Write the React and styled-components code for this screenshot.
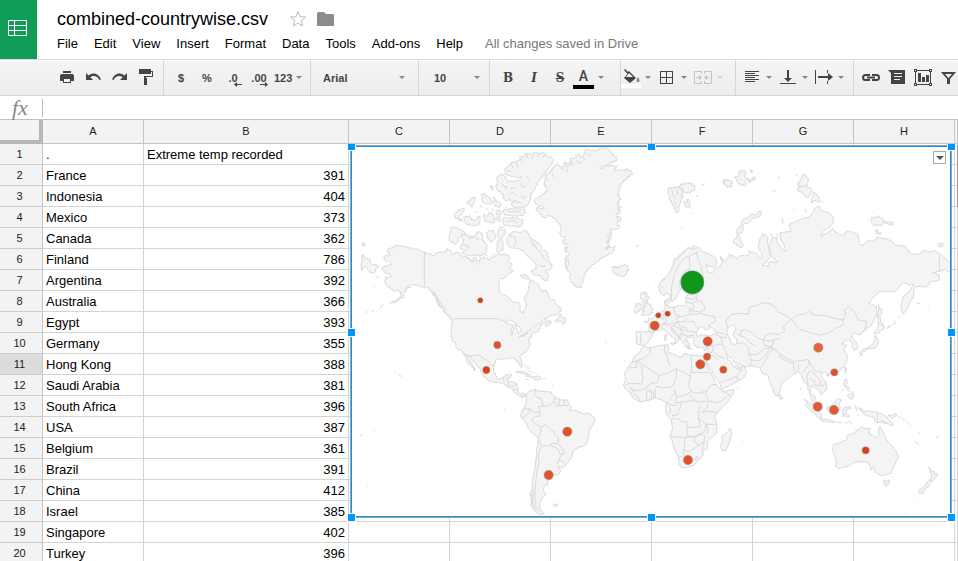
import React from 'react';
import styled, { createGlobalStyle, css } from 'styled-components';

const GlobalStyle = createGlobalStyle`
  * {
    box-sizing: border-box;
  }

  body {
    margin: 0;
    background: #fff;
    color: #000;
    font-family: "Liberation Sans", Arial, sans-serif;
    font-size: 13px;
  }

  button, select, input {
    margin: 0;
    padding: 0;
    border: none;
    background: none;
    color: inherit;
    font: inherit;
  }

  svg {
    display: block;
  }
`;

const Page = styled.div`
  display: flex;
  flex-direction: column;
  height: 100vh;
  overflow: hidden;
`;

const Header = styled.header`
  display: flex;
  flex-shrink: 0;
`;

const Logo = styled.a`
  width: 37px;
  height: 59px;
  padding: 20px 0 0 8px;
  background: #0f9d58;
`;

const HeaderInfo = styled.div`
  padding: 7px 0 0 20px;
`;

const TitleRow = styled.div`
  display: flex;
  align-items: center;
  height: 24px;
  margin-bottom: 3px;
`;

const Title = styled.h1`
  margin: 0 21px 0 0;
  font-size: 18px;
  font-weight: normal;
  line-height: 24px;
`;

const TitleButton = styled.button`
  margin-right: 10px;
`;

const MenuBar = styled.nav`
  display: flex;
  gap: 16px;
  line-height: 20px;
  white-space: nowrap;
`;

const SaveStatus = styled.span`
  margin-left: 6px;
  color: #777;
`;

const Toolbar = styled.div`
  display: flex;
  flex-shrink: 0;
  height: 37px;
  overflow: hidden;
  border-top: 1px solid #d9d9d9;
  border-bottom: 1px solid #d5d5d5;
  background: linear-gradient(#fff 1px, #f5f5f5 1px, #ececec);
  color: #444;
  font-size: 11px;
  font-weight: bold;
`;

const ToolGroup = styled.div`
  display: flex;
  flex-shrink: 0;
  align-items: center;
  gap: ${({ $gap }) => $gap ?? 0}px;
  padding: 0 ${({ $right }) => $right ?? 4}px 0 ${({ $left }) => $left ?? 0}px;
  border-right: ${({ $last }) => ($last ? 'none' : '1px solid #d5d5d5')};
`;

const ToolButton = styled.button`
  position: relative;
  display: flex;
  align-items: center;
  justify-content: center;
  width: 26px;
  height: 34px;

  ${({ $serif }) => $serif && css`
    font-family: "DejaVu Serif", serif;
    font-size: 12px;
    font-style: ${$serif === 'italic' ? 'italic' : 'normal'};
    text-decoration: ${$serif === 'strike' ? 'line-through' : 'none'};
  `}
`;

const DropButton = styled.button`
  display: flex;
  align-items: center;
  width: 34px;
  height: 34px;
  opacity: ${({ $off }) => ($off ? 0.25 : 1)};
`;

const FormatButton = styled(DropButton)`
  gap: 4px;
  padding-left: 2px;
`;

const DropIcon = styled.span`
  display: flex;
  align-items: center;
  justify-content: center;
  width: 20px;
  height: 20px;
  margin-right: 4px;
`;

const TextColor = styled.span`
  width: 21px;
  height: 22px;
  margin-right: 4px;
  border-bottom: 4px solid #000;
  font-family: Roboto, sans-serif;
  font-size: 14px;
  font-weight: 500;
  line-height: 18px;
`;

const Caret = styled.span`
  border: 3px solid transparent;
  border-top-color: #888;
  border-bottom: none;
`;

const DecimalArrow = styled.svg`
  position: absolute;
  right: 4px;
  bottom: 8px;
`;

const SelectBox = styled.label`
  display: flex;
  align-items: center;
  width: ${({ $width }) => $width}px;
  padding: 0 9px 0 ${({ $left }) => $left}px;
  flex-shrink: 0;

  select {
    flex: 1;
    min-width: 0;
    appearance: none;
    outline: none;
  }
`;

const FormulaBar = styled.label`
  display: flex;
  flex-shrink: 0;
  align-items: center;
  height: 24px;
  border-bottom: 1px solid #c0c0c0;

  input {
    flex: 1;
    height: 18px;
    padding: 0 4px;
    border-left: 1px solid #c0c0c0;
    outline: none;
  }
`;

const FormulaMark = styled.span`
  width: 42px;
  padding-left: 12px;
  color: #888;
  font-family: "Liberation Serif", serif;
  font-size: 22px;
  font-style: italic;
  line-height: 22px;
`;

const Sheet = styled.main`
  position: relative;
  flex: 1;
  overflow: hidden;
`;

const Grid = styled.table`
  width: 100%;
  table-layout: fixed;
  border-collapse: separate;
  border-spacing: 0;
`;

const ColumnHead = styled.th`
  height: 24px;
  padding: 0 0 1px;
  border-right: 1px solid #c4c4c4;
  border-bottom: 1px solid #c4c4c4;
  background: #f3f3f3;
  color: #222;
  font-size: 11px;
  font-weight: normal;
`;

const Corner = styled.td`
  padding: 0;
  border-right: 4px solid #b7b7b7;
  border-bottom: 4px solid #b7b7b7;
  background: #f3f3f3;
`;

const RowHead = styled.th`
  height: 21px;
  padding: 0 3px 0 0;
  border-right: 1px solid #c4c4c4;
  border-bottom: 1px solid #ccc;
  background: ${({ $active }) => ($active ? '#dcdcdc' : '#f3f3f3')};
  color: #222;
  font-size: 11px;
  font-weight: normal;
  line-height: 20px;
`;

const Cell = styled.td`
  height: 21px;
  padding: 2px 3px 0;
  overflow: hidden;
  border-right: 1px solid #d4d4d4;
  border-bottom: 1px solid #d4d4d4;
  line-height: 18px;
  text-align: ${({ $number }) => ($number ? 'right' : 'left')};
  white-space: nowrap;
`;

const ChartLayer = styled.div`
  position: absolute;
  inset: 24px 0 0 43px;
  overflow: hidden;
`;

const ChartFrame = styled.section`
  position: absolute;
  top: 2px;
  left: 308px;
  width: 600px;
  border: 1px solid #0096fd;
  background: #fff;
  box-shadow: 0 0 0 1px #a5a09c;
`;

const Handles = styled.div`
  position: absolute;
  inset: -1px;
  pointer-events: none;
`;

const Handle = styled.span`
  position: absolute;
  top: ${({ $y }) => $y};
  left: ${({ $x }) => $x};
  width: 9px;
  height: 9px;
  margin: -4px;
  border: 1px solid #fff;
  background: #0096fd;
`;

const ChartMenu = styled.button`
  position: absolute;
  top: 4px;
  right: 4px;
  display: flex;
  align-items: center;
  justify-content: center;
  width: 13px;
  height: 13px;
  border: 1px solid #aaa;
  background: #fff;

  span {
    border: 4px solid transparent;
    border-top-color: #555;
    border-bottom: none;
  }
`;

const ScrollThumb = styled.div`
  position: absolute;
  top: 25px;
  right: 0;
  width: 1px;
  height: 62px;
  background: #999;
`;

const MENUS = ['File', 'Edit', 'View', 'Insert', 'Format', 'Data', 'Tools', 'Add-ons', 'Help'];

const COLUMNS = ['A', 'B', 'C', 'D', 'E', 'F', 'G', 'H', ''];

const ROWS = [
  ['.', 'Extreme temp recorded'],
  ['France', 391],
  ['Indonesia', 404],
  ['Mexico', 373],
  ['Canada', 362],
  ['Finland', 786],
  ['Argentina', 392],
  ['Australia', 366],
  ['Egypt', 393],
  ['Germany', 355],
  ['Hong Kong', 388],
  ['Saudi Arabia', 381],
  ['South Africa', 396],
  ['USA', 387],
  ['Belgium', 361],
  ['Brazil', 391],
  ['China', 412],
  ['Israel', 385],
  ['Singapore', 402],
  ['Turkey', 396],
];

const ACTIVE_ROW = 11;

// Map regions. Each one has its own origin on the map canvas.
// `rough` is how far the coast is broken up between its points.
const REGIONS = [
  {
    name: 'north-america',
    at: [0, 0],
    rough: 2,
    land: [
      'M223,336 205,330 190,324 178,325 172,320 160,321 150,315 135,318 128,323 120,325 110,335 120,342 118,346 105,348 100,352 108,362 122,368 124,375 110,376 97,382 98,390 106,398 122,404 124,410 105,412 110,418 102,424 112,440 122,445 130,452 142,452 155,458 150,470 138,482 120,489 140,484 154,474 162,472 161,460 170,450 168,444 178,434 190,436 202,435 214,441 224,443 233,442 240,450 247,452 250,462 260,468 260,480 268,486 270,498 280,504 284,518 296,526 308,538 304,548 305,565 303,590 308,602 316,610 320,625 335,634 341,642 348,656 353,668 366,682 375,692 372,680 360,665 352,646 362,650 366,660 378,670 388,685 396,697 400,710 420,722 432,728 448,727 458,732 475,740 485,746 495,758 508,768 520,771 530,766 522,762 508,758 502,748 502,732 490,727 475,725 470,715 480,714 484,703 468,703 460,714 445,717 436,707 431,690 433,670 440,660 452,656 465,658 478,653 492,656 503,664 508,675 516,682 518,672 512,658 510,648 522,638 535,627 540,612 536,600 542,590 548,580 560,576 572,565 570,557 582,550 590,558 605,548 598,542 590,546 586,538 600,528 620,522 634,513 632,505 622,497 612,480 603,478 592,462 588,448 578,457 570,446 565,434 553,427 545,420 536,430 538,446 531,460 524,472 528,495 520,520 512,514 508,490 490,485 472,470 452,460 446,444 449,420 463,412 478,400 490,393 480,388 486,372 478,368 476,350 462,340 455,348 445,338 434,352 425,350 418,362 402,350 392,358 386,365 374,352 365,360 350,352 336,348 322,337 308,342 302,334 290,325 286,337 274,334 262,340 250,347 240,342 230,342Z',
      'M465,90 470,80 480,75 486,66 500,66 508,60 510,50 520,50 530,42 545,44 556,38 570,40 580,38 592,47 608,56 607,72 596,80 592,92 580,105 568,122 556,140 550,156 540,162 543,180 530,195 524,203 508,200 492,204 484,192 498,182 486,184 476,176 472,182 458,176 462,164 446,155 438,140 442,128 440,115 452,100 462,108 474,122 492,126 512,118 515,110 496,114 480,106 465,104Z',
      'M472,298 478,282 492,276 510,276 526,272 540,285 540,296 554,300 570,314 576,328 588,334 596,350 594,362 608,376 600,390 586,392 594,405 592,424 580,418 570,408 552,404 542,392 560,386 556,372 540,352 530,348 520,330 498,326 482,322 470,312Z',
      'M335,285 345,280 358,292 375,285 384,276 398,280 396,300 412,315 408,338 395,347 370,345 352,348 336,340 345,330 330,325 340,305Z',
      'M303,262 320,262 345,278 330,290 318,312 305,308 298,298Z',
      'M312,228 325,208 343,205 335,225 318,236Z',
      'M340,232 360,226 365,240 375,242 388,228 392,242 385,254 365,258 345,248Z',
      'M350,190 362,176 374,172 375,185 365,202 358,192Z',
      'M395,165 403,158 410,170 422,175 425,190 412,194 398,186Z',
      'M400,225 410,228 420,218 428,222 435,238 430,250 415,244 405,245Z',
      'M430,172 440,182 452,190 448,205 434,196Z',
      'M440,212 450,210 452,225 438,224Z',
      'M440,232 452,230 450,244 442,242Z',
      'M326,236 336,238 334,244 328,242Z',
      'M458,212 480,205 500,208 525,206 524,222 500,230 480,225 462,225Z',
      'M458,235 490,232 505,238 520,238 515,258 480,260 460,252Z',
      'M412,275 430,270 437,290 425,308 418,300 410,290Z',
      'M445,270 465,268 466,278 456,294 458,310 460,330 442,335 440,310 450,300 442,288Z',
      'M420,138 427,138 428,150 422,144Z',
      'M510,408 525,402 540,416 528,418Z',
      'M616,545 622,535 632,522 634,532 646,534 648,545 640,552 632,544Z',
      'M35,345 50,354 60,360 62,370 85,378 78,388 75,396 62,400 50,382 42,380 35,392Z',
      'M36,310 46,310 44,319 38,318Z',
      'M496,698 515,692 530,700 546,710 534,709 524,702 508,697Z',
      'M545,714 552,709 566,709 575,716 560,719Z',
      'M610,1093 622,1093 620,1099 612,1099Z',
    ],
    water: [
      'M465,545 480,539 498,550 490,557 478,552Z',
      'M487,560 482,580 486,586 491,565Z',
      'M498,554 510,562 514,572 504,580 500,568Z',
      'M506,590 522,584 534,578 520,588Z',
    ],
    borders: [
      'M223,336 223,443',
      'M310,536 445,536 465,545',
      'M512,590 535,574 548,562 565,552 580,540 588,530',
      'M341,642 362,648 390,645 400,656 410,660 420,668 426,678 434,676',
      'M460,714 462,728 M470,715 476,726 472,738 M502,733 490,738 478,738 M500,750 488,748 M520,763 518,771',
      'M240,452 262,480 270,500 290,522 308,545 M252,455 270,488 286,508 M246,458 258,476 266,498',
      'M100,492 90,506 M65,514 72,512 M45,516 52,516 M70,441 74,441 M76,408 88,414 M168,446 176,442 186,444',
      'M134,696 137,698 M146,702 156,711 M522,672 530,680 540,686 M532,690 550,700 M580,716 587,716 M528,718 536,719 M606,735 611,737',
      'M461,806 465,809 M766,605 769,607 M780,611 782,612 M28,886 36,886 M70,871 74,871 M51,1039 54,1039',
      'M480,288 495,290 498,312 488,318 M540,300 548,315 560,320 M380,368 386,374 M355,296 372,292 388,300 M340,314 356,318 350,330 M548,308 560,326 574,340 584,358 M566,374 578,380 588,376',
      // Ellesmere fjords
      'M484,74 490,84 M498,68 504,80 498,86 M512,54 518,66 M530,44 534,56 M548,46 546,58 M566,42 564,52 M584,44 578,54 M470,92 482,94 M456,130 464,142 474,140 M480,146 494,142 502,150 M476,162 490,158 500,166 M512,128 516,142 526,140 M530,110 538,120 M510,168 520,176 528,170 M500,186 514,188',
      'M392,196 396,204 M466,198 470,204 M446,262 462,262 M408,206 416,210 M376,218 384,214 M424,206 432,212 M474,214 496,216 512,214 M470,244 486,242 504,248 M466,138 470,152',
      'M388,346 392,356 M352,354 366,366 380,360 M404,344 416,350 M426,346 434,340 M470,342 478,350',
    ],
  },
  {
    name: 'south-america',
    at: [0, 540],
    land: [
      'M528,226 535,216 548,210 558,207 556,214 568,212 582,215 604,216 606,224 618,234 635,240 652,240 656,250 664,262 658,270 680,272 700,282 718,280 732,292 736,302 728,316 718,330 716,350 710,370 702,378 685,382 668,394 666,410 656,424 644,438 632,444 622,438 632,452 626,464 608,466 604,478 592,480 594,492 582,500 580,512 588,522 576,535 568,552 570,566 582,582 568,583 552,572 542,556 546,540 540,520 548,505 546,488 552,460 558,420 560,390 566,355 550,342 536,326 524,302 511,290 516,274 526,256 530,240Z',
    ],
    borders: [
      'M556,212 552,222 560,232 574,236 580,258 566,260 570,288',
      'M515,272 528,264 540,270 532,284 516,294 M536,264 550,276 568,278',
      'M570,288 552,290 546,304 562,316 574,320 570,345 566,355',
      'M574,320 588,314 600,328 612,334 616,348 626,352 624,372 606,370 598,378 574,378 566,355',
      'M580,258 596,258 612,244 616,230 M612,244 620,258 640,256 654,256 M628,238 626,256 M644,240 642,254',
      'M606,370 604,376 622,386 632,404 642,398 638,386 624,372 M642,398 630,412 622,432 M626,418 646,430',
      'M574,378 566,400 566,430 560,460 556,500 554,530 558,560 570,568',
      'M546,500 550,520 546,545 556,566 M544,524 548,548 M542,540 552,562 568,576',
    ],
  },
  {
    name: 'greenland',
    at: [540, 0],
    rough: 3,
    land: [
      'M12,182 28,168 44,162 50,150 48,135 40,132 48,118 44,105 62,98 66,84 80,75 82,68 98,90 100,70 108,68 112,82 118,66 126,76 122,55 136,54 140,44 156,50 168,38 165,25 180,33 200,30 212,26 228,22 240,35 252,44 260,58 250,68 230,74 208,84 240,78 264,78 250,92 268,88 284,94 290,84 306,97 300,110 286,116 280,128 266,138 270,152 262,165 274,178 260,190 274,202 268,218 258,224 274,238 262,250 268,262 252,270 240,268 246,282 232,288 244,300 228,306 240,318 226,328 258,318 248,335 232,348 210,355 195,372 170,388 166,402 158,418 154,444 142,438 134,440 122,418 118,400 110,384 104,372 108,352 118,344 104,330 114,316 98,304 106,296 92,285 92,262 76,235 58,228 42,232 28,222 18,205 42,204 20,192Z',
      'M247,382 256,378 262,386 272,376 288,376 298,390 280,408 262,406 250,396Z',
      'M415,148 424,142 435,145 445,138 455,150 460,170 450,184 450,198 442,218 432,206 430,192 418,180Z',
      'M450,138 462,128 475,132 484,128 495,145 480,160 464,156 456,150Z',
      'M460,185 468,188 475,178 482,200 470,202Z',
      'M578,124 590,118 600,128 590,138Z',
      'M332,466 338,456 350,458 346,468 356,470 352,484 364,502 370,520 350,524 334,526 344,514 336,510 346,500 336,488Z',
      'M316,494 330,488 334,500 330,514 314,518Z',
    ],
    borders: [
      'M520,134 524,130 M452,262 456,262 M482,221 486,220 M318,319 326,316 M356,443 359,443 M328,424 331,426 M498,170 506,168',
      'M140,60 150,72 156,64 M158,50 166,60 M170,42 184,48 M110,86 114,96 M66,100 72,112 M50,112 56,122',
      'M262,196 266,214 M260,228 266,244 M240,276 246,296 M232,300 240,312 M104,312 110,334 M110,348 106,372 114,388 M114,356 116,376 M226,318 234,328',
      'M426,152 430,170 440,176 M440,150 444,166 M434,184 440,196 M452,160 458,174 M344,478 350,494',
    ],
  },
  {
    name: 'eurasia',
    at: [0, 0],
    rough: 1,
    land: [
      'M1070,650 1075,630 1072,620 1060,624 1045,622 1033,617 1030,604 1033,595 1020,590 1008,595 1012,606 1020,612 1016,626 1006,620 998,606 988,594 986,584 975,578 968,566 961,562 964,572 978,584 992,594 986,594 984,604 977,611 976,598 962,588 950,574 940,568 930,570 918,572 908,576 910,584 902,592 896,606 882,616 872,616 860,612 858,595 860,582 858,574 880,576 896,574 898,560 893,550 882,544 896,544 896,536 908,534 920,522 935,514 946,510 944,498 944,484 956,474 958,484 954,494 960,504 975,500 990,496 1004,498 1010,486 1006,472 1014,464 1030,462 1050,456 1054,442 1030,465 1008,458 994,448 998,426 1010,408 1018,388 1008,388 996,408 986,430 992,448 982,462 978,478 964,484 958,464 948,458 942,468 930,458 926,442 930,428 940,416 956,404 962,388 970,376 972,360 986,350 998,336 1012,326 1024,324 1030,318 1046,322 1054,334 1074,340 1094,352 1102,368 1094,380 1074,380 1066,370 1074,394 1086,400 1096,384 1110,380 1116,368 1112,350 1122,364 1142,346 1160,354 1170,348 1190,346 1204,338 1194,332 1216,340 1235,355 1236,340 1225,325 1226,308 1238,280 1252,290 1254,315 1262,345 1250,366 1236,376 1254,378 1258,366 1282,366 1262,345 1256,318 1266,296 1282,290 1280,308 1308,336 1304,318 1292,300 1290,278 1322,274 1318,254 1336,244 1360,236 1380,228 1392,214 1392,206 1405,198 1414,210 1438,220 1448,228 1450,246 1440,262 1422,272 1412,288 1432,280 1448,266 1458,278 1478,286 1492,274 1508,276 1524,284 1528,310 1538,318 1552,302 1572,304 1582,290 1602,296 1622,300 1636,316 1668,318 1674,334 1690,342 1710,342 1722,330 1736,336 1756,332 1776,346 1794,362 1804,376 1804,400 1784,388 1770,394 1748,398 1768,404 1768,420 1742,426 1730,440 1698,440 1690,450 1692,470 1680,484 1676,502 1658,522 1652,500 1660,470 1676,456 1692,432 1676,436 1670,428 1654,432 1644,444 1634,456 1590,453 1570,472 1556,490 1580,500 1580,520 1572,545 1558,560 1545,568 1530,585 1512,578 1504,592 1518,605 1525,622 1514,632 1506,622 1508,610 1498,600 1488,602 1474,612 1492,616 1480,628 1492,645 1490,665 1480,682 1465,694 1442,700 1434,708 1428,698 1415,698 1416,712 1430,730 1430,750 1412,764 1408,752 1392,742 1384,736 1380,758 1394,768 1396,782 1406,800 1398,802 1386,786 1382,764 1374,750 1372,730 1362,728 1355,706 1345,694 1330,702 1312,718 1294,730 1292,750 1280,769 1272,760 1260,725 1252,704 1240,702 1230,686 1220,680 1200,678 1185,680 1165,672 1152,666 1146,656 1134,648 1132,655 1144,668 1152,682 1160,676 1168,684 1178,676 1190,692 1186,706 1176,718 1155,726 1135,740 1115,746 1108,730 1094,708 1080,685 1070,665Z',
    ],
    water: [
      'M1038,580 1046,564 1056,560 1066,570 1078,566 1076,556 1090,566 1100,580 1078,588 1056,584 1042,590Z',
      'M1132,566 1150,554 1158,568 1148,584 1160,598 1160,612 1144,612 1140,596 1130,578Z',
    ],
    borders: [
      // Scandinavia and the Baltic
      'M964,480 964,444 972,408 988,372 1006,352 1018,350 1020,388 M1018,350 1030,342 1044,336 M1040,336 1042,354 1052,376 1060,410 1052,442',
      'M970,362 984,356 996,342 1010,330 M974,368 966,380 M934,424 946,416 M932,440 940,446 M1012,322 1026,328 1040,326 M944,484 954,486 M948,492 952,500',
      'M1006,474 1028,478 1040,470 1044,456 M1006,486 1026,490 1040,482 1040,470 M1018,502 1020,524 992,530 976,524 970,502 M1026,490 1034,504 1020,510',
      'M1040,482 1056,486 1066,506 1052,516 1022,512 M1020,524 1050,520 1070,526 1094,530 1096,544 1076,556',
      // Central Europe
      'M946,512 940,528 948,536 950,546 940,550 950,556 960,552 972,550 984,544 978,534 992,530',
      'M920,522 930,534 942,536 M896,574 914,578 M936,568 936,552 950,548 M872,580 872,614',
      'M962,560 974,556 984,546 1006,544 1010,534 M984,546 990,560 1006,562 1012,574 1038,576 M1012,546 1030,544 1040,562',
      'M974,558 990,566 996,580 988,592 M996,580 1010,588 1032,586 M990,566 1006,574 M966,564 978,578 M1004,604 1016,600 M1010,616 1018,620',
      // Caucasus, Middle East
      'M1100,576 1120,580 1134,586 M1100,584 1114,592 1130,592 M1112,590 1118,612 1088,616 1074,620 M1090,618 1088,634 1074,642',
      'M1118,612 1124,628 1134,648 M1088,634 1104,648 1124,654 M1074,650 1088,646 1104,660',
      'M1108,728 1124,722 1140,718 1160,710 1176,690 M1160,710 1164,722 M1156,684 1170,690 1176,678',
      'M1160,612 1180,608 1196,622 1196,642 1204,660 1200,678 M1196,642 1220,644 1240,628 1262,622 1276,630 M1204,660 1230,662 1250,640 1262,622',
      // Central Asia
      'M1134,566 1128,550 1130,540 1144,524 1160,520 1196,522 1198,502 1222,496 1236,488 1254,490 1270,496 1288,518 1308,526 1324,538 1300,560 1304,574 1284,584 1260,580 1246,588 1240,600 1224,594 1204,578 1190,568 1172,572 1172,588 1184,592 1200,608 1220,620',
      'M1172,588 1160,582 M1240,600 1254,604 1272,600 1290,596 M1240,600 1244,616 1262,622 1270,606',
      // Mongolia, China
      'M1324,538 1340,526 1368,520 1376,514 1392,526 1424,526 1450,534 1480,540 1488,524 1482,510 1496,502 1516,518 1524,540 1550,544 1546,570 1530,584',
      'M1324,538 1350,568 1380,578 1410,586 1440,578 1458,564 1480,556 1478,540',
      // South Asia
      'M1272,600 1264,622 1288,640 1310,654 1328,664 1356,662 1374,658 M1270,626 1254,644 1244,668 1232,684 M1288,642 1290,652 1328,672',
      'M1330,666 1332,690 1338,700 M1344,668 1346,690 M1374,658 1378,674 1368,684 1358,700 M1374,658 1384,676 1398,694 1416,696',
      'M1378,694 1370,708 1376,740 M1384,690 1398,706 1412,724 1410,736 1394,736 1394,722 1378,716 M1410,736 1420,738 1426,728',
      // Chukotka
      'M1768,346 1768,394 1778,390',
      'M1700,488 1710,492 M1734,507 1737,508 M1644,534 1652,526 M1630,548 1636,542 M1612,562 1618,558',
    ],
  },
  {
    name: 'arctic-russia',
    at: [1050, 0],
    rough: 2,
    land: [
      'M180,213 185,222 176,230 160,236 146,248 132,252 126,275 116,285 120,300 130,316 126,322 112,318 100,305 110,290 112,268 122,256 128,240 146,228 158,222 166,224Z',
      'M310,103 318,106 325,120 320,138 335,148 332,166 320,172 306,160 292,150 300,140 294,132 302,118Z',
      'M340,158 346,158 350,166 360,176 358,186 344,182 334,188Z',
      'M512,238 522,230 540,232 552,240 548,254 530,258 518,252Z',
      'M552,246 566,244 580,250 570,256Z',
      'M528,268 536,276 544,280 528,282Z',
      'M715,313 724,309 730,312 728,319 717,320Z',
      'M70,124 84,118 98,128 90,134 96,140 82,142 76,132Z',
      'M104,112 116,106 118,96 128,90 138,98 134,110 148,118 136,122 138,134 122,136 114,126Z',
      'M150,92 158,92 156,98Z M146,128 160,110 166,116 156,124Z',
      'M535,493 538,502 546,510 540,532 552,566 540,568 534,540Z',
    ],
    borders: ['M233,112 240,115 M218,151 227,154 M287,104 294,108 M281,210 285,210 M316,208 318,218 M247,234 249,250 M364,184 370,188 M505,238 508,242 M520,216 522,219 M60,350 68,362 M84,342 96,348 M210,280 220,292 M228,280 234,286 M5,136 12,132 M300,140 322,138 M296,128 296,146'],
  },
  {
    name: 'africa',
    at: [750, 450],
    land: [
      'M132,170 155,174 172,168 203,164 207,176 202,187 222,192 238,202 248,200 252,190 272,195 300,198 312,196 322,200 316,214 324,235 334,252 342,268 348,284 362,298 372,304 402,298 400,310 384,334 366,352 350,370 344,382 350,400 350,430 336,442 322,454 322,476 308,482 310,494 296,512 280,526 262,532 245,534 238,524 234,498 222,476 216,452 210,438 218,415 214,390 200,374 196,356 200,338 186,330 165,324 140,333 118,335 100,324 86,304 76,296 70,284 78,268 72,252 84,232 98,214 102,200 118,188 124,176Z',
      'M390,415 396,430 388,458 378,480 366,482 362,468 368,454 366,438 380,430Z',
      'M260,172 276,176 268,178Z M310,180 320,176 316,182Z',
      'M196,132 200,136 198,152 192,150Z M226,158 220,164 210,160Z',
    ],
    borders: [
      'M148,172 152,190 132,204 110,212 96,216 M110,212 110,232 88,234 M110,212 150,238 176,256 194,254 230,236',
      'M125,226 128,270 126,282 92,280 76,284 M194,166 192,182 202,200 204,212 210,228',
      'M274,195 274,248 M274,247 326,247 M230,236 272,258 272,246 M230,236 228,268 216,290',
      'M176,256 174,276 150,282 138,296 124,300 106,302 92,294 M216,290 190,294 172,288 166,298 166,324 M224,296 224,310 206,332',
      'M272,258 266,286 274,304 262,312 230,322 226,304 M274,304 290,310 318,304 M266,312 286,332 302,336 320,334',
      'M350,284 334,284 322,298 316,314 328,334 348,338 366,332 388,314 370,306 366,298',
      'M230,322 228,338 244,336 262,334 286,332 M244,336 240,356 232,374 216,378 M216,386 236,388 246,396 260,394 262,412 284,412 300,408 296,384 296,360 304,346',
      'M352,368 324,364 302,366 M324,334 322,352 306,366 M296,384 316,402 346,404 M316,402 318,420 302,432 286,440 262,438 260,412',
      'M210,440 250,442 284,440 298,432 314,436 312,456 298,464 284,456 284,440 M318,402 324,414 322,430',
      'M256,444 252,476 250,500 236,500 M250,478 266,486 282,476 298,464 M312,456 306,478 308,482 M284,504 292,498 294,506 286,510Z M304,486 308,494',
      'M118,335 114,318 100,314 M140,333 140,306 M154,326 154,304 138,302 M162,324 160,304 M88,294 100,304 90,312',
      'M200,338 216,346 230,346 M206,350 212,360 206,374 M70,190 73,192 M72,213 75,214 M84,214 87,214 M16,157 19,157 M30,161 32,161',
      'M410,295 416,296 M420,460 422,461 M428,455 431,456',
    ],
  },
  {
    name: 'oceania',
    at: [1200, 540],
    rough: 1,
    land: [
      'M250,375 262,370 276,366 290,358 292,348 304,340 312,342 318,332 330,326 334,320 346,326 360,325 356,340 368,346 380,354 386,346 386,330 390,318 396,334 404,342 408,360 424,374 430,386 440,396 444,412 436,432 428,446 424,460 412,462 400,468 386,462 376,456 370,440 362,450 360,436 352,428 336,424 312,428 296,438 280,442 266,446 256,438 260,428 252,404 248,388Z',
      'M400,480 410,484 419,480 416,492 408,498 402,490Z',
      'M535,441 546,454 552,454 552,462 564,462 556,474 546,484 540,478 546,466Z',
      'M538,480 544,484 538,496 524,508 520,520 508,520 506,512 520,502Z',
      'M325,264 338,268 342,276 352,272 366,276 384,276 400,286 412,292 418,304 430,312 428,318 410,310 396,300 392,308 376,306 370,292 356,288 342,284 338,276Z',
      'M414,286 428,286 438,280 440,288 424,294Z',
      'M162,238 174,244 190,258 204,272 214,282 216,298 206,294 192,278 180,262Z',
      'M210,298 224,296 238,300 254,303 254,308 236,306 216,303Z',
      'M230,262 240,258 252,250 262,236 274,240 268,252 270,264 262,280 244,280 234,274Z',
      'M278,272 282,262 302,260 300,266 286,268 290,276 298,290 290,292 284,280 280,292Z',
      'M282,180 290,176 292,188 288,196 300,206 290,204 282,196Z',
      'M292,226 304,222 308,214 312,230 304,238 296,232Z',
      'M230,164 236,162 234,170Z M284,142 290,144 286,158Z',
      'M85,224 92,226 98,236 90,238Z',
      'M372,40 382,26 388,10 396,14 404,24 392,32 384,40Z',
      'M374,46 382,52 384,66 380,80 370,86 356,86 346,92 338,96 334,108 328,98 340,88 352,84 366,76 374,62Z',
    ],
    borders: [
      'M382,276 382,306 M165,252 178,268 190,280 M258,306 276,308 M284,310 300,304 M300,312 306,308 M316,256 320,272 M322,284 326,290 M274,214 284,206 M290,208 300,214',
      'M444,290 452,292 M456,296 464,300 M468,302 474,308 M476,310 484,320 M492,362 508,374 M556,354 570,346 M505,338 510,342 M410,26 424,16 M428,14 438,8',
      'M326,126 328,124 M316,136 318,134 M502,547 505,548 M466,578 470,580 M150,202 152,210 M234,264 252,260 262,246 M394,306 410,312',
    ],
  },
];

// Adds small bays and headlands between the points of a coast line.
const roughen = (d, amount) => {
  if (!amount) return d;
  return d
    .split('M')
    .filter(Boolean)
    .map((part) => {
      const points = part.replace('Z', '').trim().split(' ').map((pair) => pair.split(',').map(Number));
      const coast = points.flatMap(([x, y], i) => {
        const [nextX, nextY] = points[(i + 1) % points.length];
        const dx = nextX - x;
        const dy = nextY - y;
        const length = Math.hypot(dx, dy);
        if (length < 8 || length > 60) return [`${x},${y}`];
        const side = i % 2 ? amount : -amount;
        const at = (t, offset) => (
          `${Math.round(x + dx * t - (dy / length) * offset)},${Math.round(y + dy * t + (dx / length) * offset)}`
        );
        return [`${x},${y}`, at(0.35, side), at(0.65, -side)];
      });
      return `M${coast.join(' ')}Z`;
    })
    .join(' ');
};

const WARM = '#dc3912';
const SOFT = '#e0522c';

// x / y / r in the same units as the map canvas
const BUBBLES = [
  { name: 'Canada', x: 391, y: 481, r: 8, color: WARM },
  { name: 'USA', x: 442, y: 615, r: 11, color: SOFT },
  { name: 'Mexico', x: 409, y: 690, r: 11, color: '#de4219' },
  { name: 'Brazil', x: 652, y: 875, r: 14, color: SOFT },
  { name: 'Argentina', x: 596, y: 1005, r: 14, color: SOFT },
  { name: 'Finland', x: 1027, y: 427, r: 35, color: '#109618' },
  { name: 'Belgium', x: 925, y: 526, r: 8, color: WARM },
  { name: 'Germany', x: 953, y: 521, r: 8, color: WARM },
  { name: 'France', x: 914, y: 557, r: 14, color: SOFT },
  { name: 'Turkey', x: 1073, y: 604, r: 14, color: SOFT },
  { name: 'Israel', x: 1071, y: 650, r: 11, color: SOFT },
  { name: 'Egypt', x: 1051, y: 673, r: 14, color: SOFT },
  { name: 'Saudi Arabia', x: 1120, y: 689, r: 11, color: SOFT },
  { name: 'South Africa', x: 1014, y: 960, r: 14, color: SOFT },
  { name: 'China', x: 1405, y: 623, r: 14, color: '#e3643f' },
  { name: 'Hong Kong', x: 1453, y: 697, r: 11, color: SOFT },
  { name: 'Singapore', x: 1403, y: 800, r: 14, color: '#e15a35' },
  { name: 'Indonesia', x: 1452, y: 810, r: 14, color: '#e15a35' },
  { name: 'Australia', x: 1547, y: 931, r: 11, color: '#dd3e16' },
];

const WorldMap = () => (
  <svg viewBox="6 21 1794 1107" width="100%" role="img" aria-label="Extreme temp recorded">
    {REGIONS.map(({ name, at, rough, land, water = [], borders = [] }) => (
      <g
        key={name}
        transform={`translate(${at[0]} ${at[1]})`}
        fill="#f4f4f4"
        stroke="#d9d9d9"
        strokeWidth="3"
        strokeLinejoin="round"
      >
        {land.map((d) => <path key={d} d={roughen(d, rough)} />)}
        {water.map((d) => <path key={d} d={d} fill="#fff" />)}
        {borders.map((d) => <path key={d} d={d} fill="none" />)}
      </g>
    ))}
    {BUBBLES.map(({ name, x, y, r, color }) => (
      <circle key={name} cx={x} cy={y} r={r} fill={color} stroke="#999" strokeOpacity="0.7" strokeWidth="2" />
    ))}
  </svg>
);

const HANDLES = [
  ['0%', '0%'], ['50%', '0%'], ['100%', '0%'],
  ['0%', '50%'], ['100%', '50%'],
  ['0%', '100%'], ['50%', '100%'], ['100%', '100%'],
];

const Icon = ({ size = 20, children }) => (
  <svg width={size} height={size} viewBox={`0 0 ${size} ${size}`} fill="#444" aria-hidden="true">
    {children}
  </svg>
);

const PrintIcon = () => (
  <Icon><path d="M6 3h8v2H6z M5 6h10a2 2 0 0 1 2 2v5h-3v-3H6v3H3V8a2 2 0 0 1 2-2z M6 10h8v5H6z M7 11v3h6v-3z" fillRule="evenodd" /></Icon>
);

const UndoIcon = () => (
  <Icon><path d="M3 5v7h7L7.300 9.300C10 7 14.500 7.500 16.500 12L18 11.300C15.500 5 9.500 4 5.500 7.500z" /></Icon>
);

const RedoIcon = () => (
  <Icon><path d="M18 5v7h-7l2.700-2.700C11 7 6.500 7.500 4.500 12L3 11.300C5.500 5 11.500 4 15.500 7.500z" /></Icon>
);

const PaintIcon = () => (
  <Icon><path d="M4 1h12v5H4z M16 3h2v6h-7v1h1v7H9V8h8V4h-1z" /></Icon>
);

const BucketIcon = () => (
  <svg width="20" height="20" viewBox="0 0 20 20" aria-hidden="true">
    <path d="M0 16h20v4H0z" fill="#fff" />
    <path d="M4 1l3 3 1-1 7 7-6 5-6-5 3.500-4L3 2z" fill="#444" />
    <path d="M8 5l4 4H5z" fill="#f1f1f1" />
    <path d="M17 9c2 3 2 5 0 5s-2-2 0-5z" fill="#888" />
  </svg>
);

const BordersIcon = () => (
  <Icon><path d="M3 3h13v13H3z M4 4v5h5V4z M10 4v5h5V4z M4 10v5h5v-5z M10 10v5h5v-5z" fillRule="evenodd" /></Icon>
);

const MergeIcon = () => (
  <Icon>
    <path d="M8 3.500H1.500v12H8M11 3.500h7.500v12H11M8.500 3v3M11.500 3v3M8.500 13v3M11.500 13v3" fill="none" stroke="#444" />
    <path d="M3 9h3V7l3 2.500L6 12v-2H3z M17 9h-3V7l-3 2.500 3 2.500v-2h3z" />
  </Icon>
);

const AlignIcon = () => (
  <Icon><path d="M3 3h14v1H3z M3 5h10v1H3z M3 7h14v1H3z M3 9h10v1H3z M3 11h14v1H3z M3 13h10v1H3z" /></Icon>
);

const BottomIcon = () => (
  <Icon><path d="M9 2h2v8h3l-4 4-4-4h3z M2 15h16v1H2z" /></Icon>
);

const WrapIcon = () => (
  <Icon><path d="M1 2h1v14H1z M4 8h10V5l5 4-5 4v-3H4z M13 2h1v3h-1z M13 13h1v3h-1z" /></Icon>
);

const LinkIcon = () => (
  <Icon>
    <path d="M9 12H4.500a2.500 2.500 0 0 1 0-5H9M11 7h4.500a2.500 2.500 0 0 1 0 5H11M6 9.500h8" fill="none" stroke="#444" strokeWidth="2" />
  </Icon>
);

const CommentIcon = () => (
  <Icon><path d="M1 2h17v14H4V5z M7 5v1h8V5z M7 8v1h8V8z M7 11v1h6v-1z" fillRule="evenodd" /></Icon>
);

const ChartIcon = () => (
  <Icon>
    <path d="M2.500 2.500h15v14h-15z" fill="none" stroke="#444" />
    <path d="M1 1h3v3H1z M16 1h3v3h-3z M1 15h3v3H1z M16 15h3v3h-3z M5 5h3v9H5z M9 9h3v5H9z M13 7h3v7h-3z" />
    <path d="M2 2h1v1H2z M17 2h1v1h-1z M2 16h1v1H2z M17 16h1v1h-1z" fill="#fff" />
  </Icon>
);

const FilterIcon = () => (
  <Icon><path d="M2 4h15l-6 7v5H8v-5z M6 6l3.500 4L13 6z" fillRule="evenodd" /></Icon>
);

const App = () => (
  <>
    <GlobalStyle />
    <Page>
      <Header>
        <Logo href="#" aria-label="Sheets home">
          <svg width="19" height="16" viewBox="0 0 19 16" fill="none" stroke="#fff" aria-hidden="true">
            <path d="M0.500 0.500h18v15h-18z M6.500 0v16 M0 5.500h19 M0 10.500h19" />
          </svg>
        </Logo>
        <HeaderInfo>
          <TitleRow>
            <Title>combined-countrywise.csv</Title>
            <TitleButton aria-label="Star">
              <svg width="18" height="18" viewBox="0 0 18 18" fill="none" stroke="#bbb" aria-hidden="true">
                <path d="M9 1.500l2 5.200 5.500.3-4.300 3.500 1.500 5.500L9 12.900 4.300 16l1.500-5.500L1.500 7l5.500-.3z" />
              </svg>
            </TitleButton>
            <TitleButton aria-label="Move to folder">
              <svg width="17" height="14" viewBox="0 0 17 14" fill="#8c8c8c" aria-hidden="true">
                <path d="M1 0h6l2 2h7a1 1 0 0 1 1 1v11H0V1z" />
              </svg>
            </TitleButton>
          </TitleRow>
          <MenuBar>
            {MENUS.map((menu) => <button key={menu}>{menu}</button>)}
            <SaveStatus>All changes saved in Drive</SaveStatus>
          </MenuBar>
        </HeaderInfo>
      </Header>

      <Toolbar role="toolbar">
        <ToolGroup $left={54} $right={5}>
          <ToolButton aria-label="Print"><PrintIcon /></ToolButton>
          <ToolButton aria-label="Undo"><UndoIcon /></ToolButton>
          <ToolButton aria-label="Redo"><RedoIcon /></ToolButton>
          <ToolButton aria-label="Paint format"><PaintIcon /></ToolButton>
        </ToolGroup>
        <ToolGroup $left={4}>
          <ToolButton>$</ToolButton>
          <ToolButton>%</ToolButton>
          <ToolButton>
            .0
            <DecimalArrow width="8" height="5" fill="#444" aria-hidden="true">
              <path d="M0 2.500L3 0v2h5v1H3v2z" />
            </DecimalArrow>
          </ToolButton>
          <ToolButton>
            .00
            <DecimalArrow width="8" height="5" fill="#444" aria-hidden="true">
              <path d="M8 2.500L5 0v2H0v1h5v2z" />
            </DecimalArrow>
          </ToolButton>
          <FormatButton>123<Caret /></FormatButton>
        </ToolGroup>
        <ToolGroup>
          <SelectBox $width={103} $left={12}>
            <select aria-label="Font"><option>Arial</option></select>
            <Caret />
          </SelectBox>
        </ToolGroup>
        <ToolGroup $right={0}>
          <SelectBox $width={70} $left={15}>
            <select aria-label="Font size"><option>10</option></select>
            <Caret />
          </SelectBox>
        </ToolGroup>
        <ToolGroup $left={5} $right={13}>
          <ToolButton $serif="normal">B</ToolButton>
          <ToolButton $serif="italic">I</ToolButton>
          <ToolButton $serif="strike">S</ToolButton>
          <DropButton><TextColor>A</TextColor><Caret /></DropButton>
        </ToolGroup>
        <ToolGroup $gap={2} $right={8}>
          <DropButton aria-label="Fill color"><DropIcon><BucketIcon /></DropIcon><Caret /></DropButton>
          <DropButton aria-label="Borders"><DropIcon><BordersIcon /></DropIcon><Caret /></DropButton>
          <DropButton aria-label="Merge cells" $off><DropIcon><MergeIcon /></DropIcon><Caret /></DropButton>
        </ToolGroup>
        <ToolGroup $gap={2} $left={6} $right={5}>
          <DropButton aria-label="Horizontal align"><DropIcon><AlignIcon /></DropIcon><Caret /></DropButton>
          <DropButton aria-label="Vertical align"><DropIcon><BottomIcon /></DropIcon><Caret /></DropButton>
          <DropButton aria-label="Text wrapping"><DropIcon><WrapIcon /></DropIcon><Caret /></DropButton>
        </ToolGroup>
        <ToolGroup $left={4} $last>
          <ToolButton aria-label="Insert link"><LinkIcon /></ToolButton>
          <ToolButton aria-label="Insert comment"><CommentIcon /></ToolButton>
          <ToolButton aria-label="Insert chart"><ChartIcon /></ToolButton>
          <ToolButton aria-label="Filter"><FilterIcon /></ToolButton>
        </ToolGroup>
      </Toolbar>

      <FormulaBar>
        <FormulaMark>fx</FormulaMark>
        <input type="text" />
      </FormulaBar>

      <Sheet>
        <Grid>
          <colgroup>
            <col width="43" />
            <col width="101" />
            <col width="205" />
            {COLUMNS.slice(2, -1).map((name) => <col key={name} width="101" />)}
            <col />
          </colgroup>
          <thead>
            <tr>
              <Corner />
              {COLUMNS.map((name) => <ColumnHead key={name} scope="col">{name}</ColumnHead>)}
            </tr>
          </thead>
          <tbody>
            {ROWS.map(([label, value], index) => (
              <tr key={label}>
                <RowHead scope="row" $active={index + 1 === ACTIVE_ROW}>{index + 1}</RowHead>
                <Cell>{label}</Cell>
                <Cell $number={typeof value === 'number'}>{value}</Cell>
                {COLUMNS.slice(2).map((name) => <Cell key={name} />)}
              </tr>
            ))}
          </tbody>
        </Grid>
        <ChartLayer>
          <ChartFrame>
            <WorldMap />
            <ChartMenu aria-label="Chart options"><span /></ChartMenu>
            <Handles>
              {HANDLES.map(([x, y]) => <Handle key={x + y} $x={x} $y={y} />)}
            </Handles>
          </ChartFrame>
        </ChartLayer>
        <ScrollThumb />
      </Sheet>
    </Page>
  </>
);

export default App;
